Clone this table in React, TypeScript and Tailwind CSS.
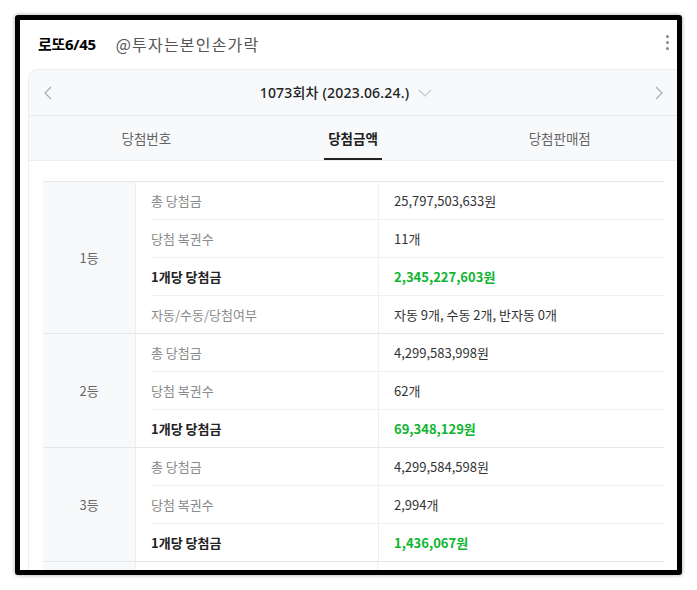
import React from "react";

type Row = { label: string; value: React.ReactNode; strong?: boolean };
type Group = { rank: string; rows: Row[] };

const groups: Group[] = [
  {
    rank: "1",
    rows: [
      { label: "총 당첨금", value: "25,797,503,633원" },
      { label: "당첨 복권수", value: "11개" },
      { label: "1개당 당첨금", value: "2,345,227,603원", strong: true },
      { label: "자동/수동/당첨여부", value: "자동 9개, 수동 2개, 반자동 0개" },
    ],
  },
  {
    rank: "2",
    rows: [
      { label: "총 당첨금", value: "4,299,583,998원" },
      { label: "당첨 복권수", value: "62개" },
      { label: "1개당 당첨금", value: "69,348,129원", strong: true },
    ],
  },
  {
    rank: "3",
    rows: [
      { label: "총 당첨금", value: "4,299,584,598원" },
      { label: "당첨 복권수", value: "2,994개" },
      { label: "1개당 당첨금", value: "1,436,067원", strong: true },
    ],
  },
];

const Chevron = ({ dir }: { dir: "left" | "right" | "down" }) => {
  const d =
    dir === "left" ? "M9 2 L3 8 L9 14" : dir === "right" ? "M3 2 L9 8 L3 14" : "M2 4 L8 10 L14 4";
  const size = dir === "down" ? { w: 16, h: 14 } : { w: 12, h: 16 };
  return (
    <svg width={size.w} height={size.h} viewBox={`0 0 ${size.w} ${size.h}`} fill="none">
      <path d={d} stroke={dir === "down" ? "#c4c7cc" : "#a8abb0"} strokeWidth="1.2" />
    </svg>
  );
};

const tabs = ["당첨번호", "당첨금액", "당첨판매점"];
const cjk = { fontFamily: '"Noto Sans CJK KR", sans-serif' };

export default function App() {
  return (
    <div
      className="w-[697px] h-[590px] bg-white pt-[15px] pl-[15px]"
      style={{ fontFamily: '"Noto Sans", "Noto Sans CJK KR", sans-serif' }}
    >
      <div className="w-[667px] h-[560px] border-[5px] border-black rounded-[3px] bg-white overflow-hidden shadow-[0_0_4px_rgba(0,0,0,0.35)] flex flex-col">
        {/* header */}
        <div className="h-[49px] shrink-0 flex items-center pl-[18px] pr-[8px] pb-[1px]">
          <span className="text-[15px] font-bold text-black tracking-[-0.3px]">로또6/45</span>
          <span className="ml-[20px] text-[16px] tracking-[1.2px] text-[#555]" style={cjk}>
            @투자는본인손가락
          </span>
          <div className="ml-auto flex flex-col gap-[3px] mb-[4px]">
            <span className="w-[3px] h-[3px] bg-[#888] rounded-full" />
            <span className="w-[3px] h-[3px] bg-[#888] rounded-full" />
            <span className="w-[3px] h-[3px] bg-[#888] rounded-full" />
          </div>
        </div>

        {/* card */}
        <div className="ml-[8px] flex-1 border-l border-t border-[#eceef1] rounded-tl-[10px] overflow-hidden">
          <div className="bg-[#f8f9fb]">
            <div className="h-[46px] flex items-center justify-between pl-[13px] pr-[12px] border-b border-[#e9ebee]">
              <Chevron dir="left" />
              <div className="flex items-center gap-[8px] pr-[14px]">
                <span className="text-[14px] font-medium text-[#222] tracking-[0.2px]">1073회차 (2023.06.24.)</span>
                <Chevron dir="down" />
              </div>
              <Chevron dir="right" />
            </div>
            <div className="h-[45px] flex px-[14px] border-b border-[#eceef1]" style={cjk}>
              {tabs.map((t, i) => (
                <div key={t} className="flex-1 flex justify-center">
                  <div
                    className={
                      i === 1
                        ? "h-full flex items-center px-[4px] border-b-2 border-[#222] text-[13.5px] font-bold text-[#222] pt-[2px]"
                        : "h-full flex items-center px-[4px] text-[13.5px] text-[#666]"
                    }
                  >
                    {t}
                  </div>
                </div>
              ))}
            </div>
          </div>

          {/* table */}
          <div className="pt-[20px] pl-[14px] pr-[13px]" style={cjk}>
            <div className="border-t border-[#e6e7e9]">
              {groups.map((g) => (
                <div key={g.rank} className="flex border-b border-[#e6e7e9]">
                  <div className="w-[93px] shrink-0 bg-[#f8f9fb] border-r border-[#eceef1] flex items-center justify-center text-[13px] text-[#666]">
                    {g.rank}등
                  </div>
                  <div className="flex-1 flex flex-col">
                    {g.rows.map((r, i) => {
                      const last = i === g.rows.length - 1;
                      return (
                        <div key={r.label} className={last ? "flex h-[37px]" : "flex h-[38px]"}>
                          <div
                            className={`w-[227px] ml-[15px] shrink-0 flex items-center text-[13px] ${
                              r.strong ? "font-bold text-[#222]" : "text-[#8a8a8a]"
                            } ${last ? "" : "border-b border-[#f0f0f0]"}`}
                          >
                            {r.label}
                          </div>
                          <div
                            className={`flex-1 flex items-center pl-[15px] border-l border-[#eceef1] text-[13px] ${
                              r.strong ? "font-bold text-[#0db52f]" : "text-[#333]"
                            } ${last ? "" : "border-b border-[#f0f0f0]"}`}
                          >
                            {r.value}
                          </div>
                        </div>
                      );
                    })}
                  </div>
                </div>
              ))}
              {/* next rank, cut off by the frame */}
              <div className="flex h-[38px]">
                <div className="w-[93px] shrink-0 bg-[#f8f9fb] border-r border-[#eceef1]" />
                <div className="w-[242px] shrink-0 border-r border-[#eceef1]" />
              </div>
            </div>
          </div>
        </div>
      </div>
    </div>
  );
}
